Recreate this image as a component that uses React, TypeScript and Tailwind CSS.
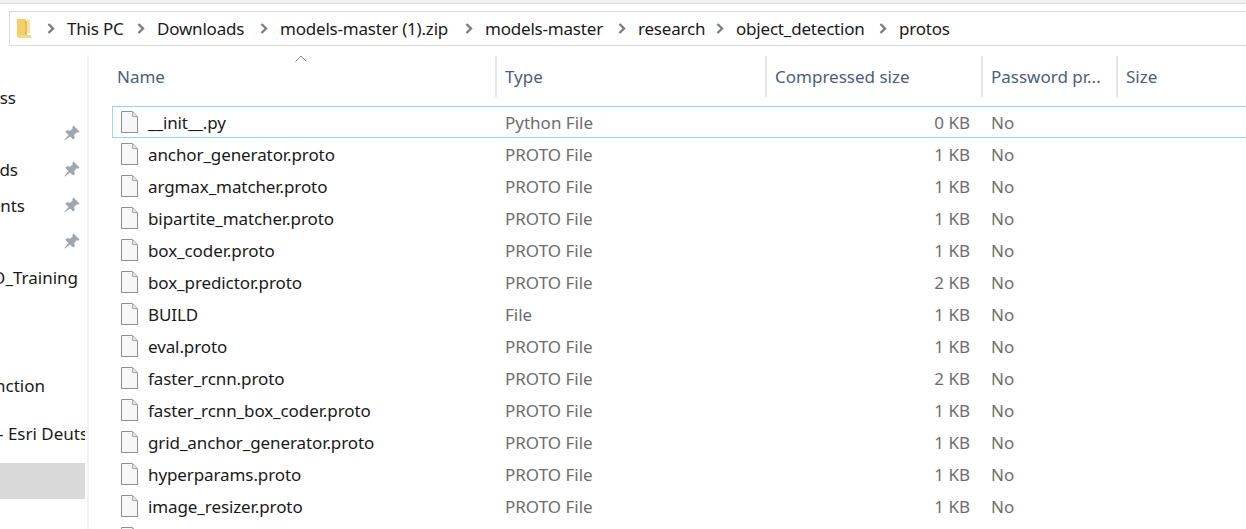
const crumbs = [
  { label: "This PC", width: "w-[90px]" },
  { label: "Downloads", width: "w-[123px]" },
  { label: "models-master (1).zip", width: "w-[205px]" },
  { label: "models-master", width: "w-[153px]" },
  { label: "research", width: "w-[98px]" },
  { label: "object_detection", width: "w-[163px]" },
  { label: "protos", width: "w-[80px]" },
];

const files = [
  { name: "__init__.py", type: "Python File", size: "0 KB" },
  { name: "anchor_generator.proto", type: "PROTO File", size: "1 KB" },
  { name: "argmax_matcher.proto", type: "PROTO File", size: "1 KB" },
  { name: "bipartite_matcher.proto", type: "PROTO File", size: "1 KB" },
  { name: "box_coder.proto", type: "PROTO File", size: "1 KB" },
  { name: "box_predictor.proto", type: "PROTO File", size: "2 KB" },
  { name: "BUILD", type: "File", size: "1 KB" },
  { name: "eval.proto", type: "PROTO File", size: "1 KB" },
  { name: "faster_rcnn.proto", type: "PROTO File", size: "2 KB" },
  { name: "faster_rcnn_box_coder.proto", type: "PROTO File", size: "1 KB" },
  { name: "grid_anchor_generator.proto", type: "PROTO File", size: "1 KB" },
  { name: "hyperparams.proto", type: "PROTO File", size: "1 KB" },
  { name: "image_resizer.proto", type: "PROTO File", size: "1 KB" },
  { name: "input_reader.proto", type: "PROTO File", size: "1 KB" },
];

function FolderIcon() {
  return (
    <svg width="15" height="21" viewBox="0 0 15 21" className="shrink-0">
      <path d="M1 1h9v16l-6 3-3-1z" fill="#f2cf6b" />
      <path d="M10 1l1 1v13h3V2z" fill="#fbe39a" />
      <path d="M4 17h11v3H4z" fill="#f7d97f" />
      <path d="M9 3h2v14H9z" fill="#e9bd4f" />
    </svg>
  );
}

function Chevron() {
  return (
    <svg width="8" height="11" viewBox="0 0 8 11" className="shrink-0">
      <path d="M1.5 1l4.5 4.5L1.5 10" fill="none" stroke="#7d7d7d" strokeWidth="2.4" />
    </svg>
  );
}

function PinIcon() {
  return (
    <svg width="16" height="16" viewBox="0 0 16 16">
      <polygon
        points="9.5,0.5 15.5,6.5 14,7.8 12.8,7.2 10.2,10 10.8,13 9.2,14.6 6,11.5 1,15.6 0.4,15 4.5,10 1.4,6.8 3,5.3 6,5.8 8.8,3.2 8.2,2"
        fill="#9ea7ae"
      />
    </svg>
  );
}

function FileIcon() {
  return (
    <svg width="17" height="22" viewBox="0 0 17 22" className="shrink-0">
      <path d="M.5.5h11l5 5v16H.5z" fill="#f7f7f7" stroke="#8f8f8f" />
      <path d="M11.5.5v5h5" fill="#e4e4e4" stroke="#a8a8a8" />
    </svg>
  );
}

function SideRow({ children, pin }: { children?: React.ReactNode; pin?: boolean }) {
  return (
    <div className="flex h-9 shrink-0 items-center justify-between overflow-hidden whitespace-nowrap">
      {children ?? <span />}
      {pin && (
        <span className="mb-[2px] mr-[5px]">
          <PinIcon />
        </span>
      )}
    </div>
  );
}

function Clipped({ text, className }: { text: string; className: string }) {
  return <div className={`flex justify-end overflow-hidden ${className}`}><span className="shrink-0">{text}</span></div>;
}

function HeaderCell({ label }: { label: string }) {
  return (
    <div className="flex h-[41px] items-center overflow-hidden whitespace-nowrap border-l-2 border-[#e5e5e5] pl-[8px]">
      {label}
    </div>
  );
}

export default function App() {
  return (
    <div className="h-[529px] w-[1246px] overflow-hidden bg-white font-['Noto_Sans',sans-serif] text-[17px] text-[#1a1a1a]">
      <div className="h-[4px] border-b border-[#dcdcdc] bg-[#f0f0f0]" />

      <div className="ml-[9px] mt-[7px] flex h-[35px] items-center border border-r-0 border-[#d9d9d9] pl-[6px]">
        <FolderIcon />
        <div className="ml-[16px] flex items-center">
          {crumbs.map((crumb) => (
            <div key={crumb.label} className={`flex shrink-0 items-center gap-[12px] ${crumb.width}`}>
              <Chevron />
              <span className="whitespace-nowrap tracking-[-0.2px]">{crumb.label}</span>
            </div>
          ))}
        </div>
      </div>

      <div className="flex">
        {/* nav pane, cut off at the left */}
        <aside className="mt-[9px] flex h-[480px] w-[89px] shrink-0 flex-col border-r-2 border-[#f2f2f2] pr-[2px] pt-[25px]">
          <SideRow><Clipped text="Quick access" className="w-[16px]" /></SideRow>
          <SideRow pin />
          <SideRow pin><Clipped text="Downloads" className="w-[18px]" /></SideRow>
          <SideRow pin><Clipped text="Documents" className="w-[25px]" /></SideRow>
          <SideRow pin />
          <SideRow><Clipped text="TFO_Training" className="w-[78px]" /></SideRow>
          <SideRow />
          <SideRow />
          <SideRow><Clipped text="Junction" className="w-[45px]" /></SideRow>
          <div className="mt-[12px]">
            <SideRow><span className="-ml-[2px]">- Esri Deutschland</span></SideRow>
          </div>
          <div className="mt-[11px] h-9 w-[85px] shrink-0 bg-[#d9d9d9]" />
        </aside>

        <main className="ml-[23px] min-w-0 flex-1">
          <div className="relative mt-[10px] grid grid-cols-[383px_270px_216px_135px_1fr] text-[#4c607a]">
            <svg width="12" height="7" viewBox="0 0 12 7" className="absolute -top-px left-[183px]">
              <path d="M.5 6.5L6 1l5.5 5.5" fill="none" stroke="#8a8a8a" />
            </svg>
            <div className="flex h-[41px] items-center pl-[5px]">Name</div>
            <HeaderCell label="Type" />
            <HeaderCell label="Compressed size" />
            <HeaderCell label="Password pr..." />
            <HeaderCell label="Size" />
          </div>

          <div className="mt-[9px]">
            {files.map((file, i) => (
              <div
                key={file.name}
                className={`grid h-8 grid-cols-[383px_270px_216px_135px_1fr] items-center whitespace-nowrap text-[#6d6d6d] ${
                  i === 0 ? "border border-r-0 border-[#99d1ff]" : "border border-transparent"
                }`}
              >
                <div className="flex items-center gap-[10px] pl-[8px] text-[#1a1a1a]">
                  <FileIcon />
                  <span className="pt-[2px] tracking-[-0.1px]">{file.name}</span>
                </div>
                <div className="pl-[9px] pt-[2px]">{file.type}</div>
                <div className="pr-[12px] pt-[2px] text-right">{file.size}</div>
                <div className="pl-[9px] pt-[2px]">No</div>
                <div />
              </div>
            ))}
          </div>
        </main>
      </div>
    </div>
  );
}
